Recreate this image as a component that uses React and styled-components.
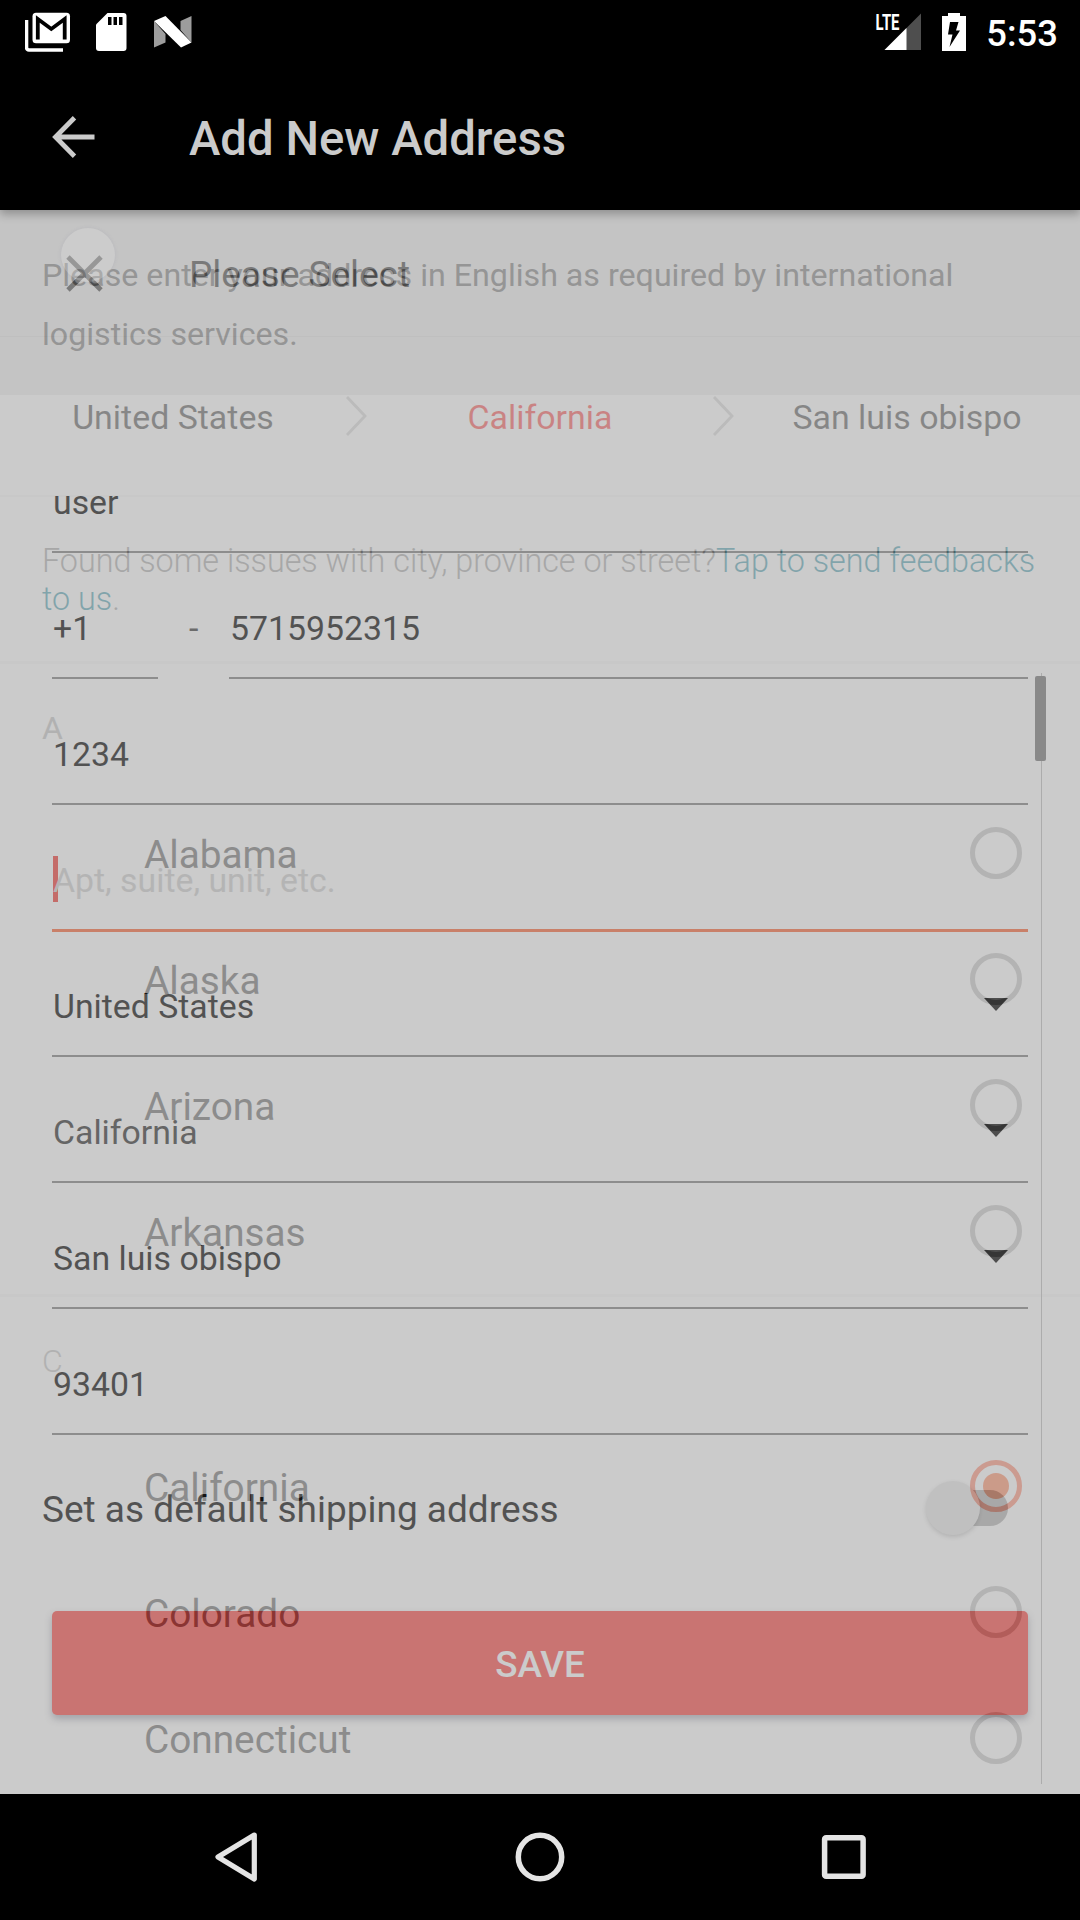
import React from "react";
import styled, { createGlobalStyle } from "styled-components";

const GlobalStyle = createGlobalStyle`
  * { box-sizing: border-box; }
  body { margin: 0; background: #000; font-family: Roboto, "Liberation Sans", sans-serif; }
`;

const Screen = styled.div`
  width: 1080px;
  height: 1920px;
  display: flex;
  flex-direction: column;
  overflow: hidden;
  background: #000;
`;

/* System status bar */
const StatusBar = styled.header`
  height: 72px;
  flex: none;
  display: flex;
  justify-content: space-between;
  padding: 0 22px 0 25px;
  color: #fff;
`;
const StatusGroup = styled.div`
  display: flex;
  align-items: center;
  gap: ${(p) => p.$gap}px;
  height: 64px;
`;
const Clock = styled.span`
  font-size: 36.4px;
  font-weight: 500;
  line-height: 40px;
  padding-top: 3px;
`;

/* App bar */
const AppBar = styled.div`
  height: 138px;
  flex: none;
  display: flex;
  align-items: center;
  padding: 0 52px 9px;
  color: #cbcbcb;
  background: #000;
  box-shadow: 0 4px 9px rgba(0, 0, 0, 0.28);
  z-index: 2;
`;
const AppTitle = styled.h1`
  margin: 0 0 0 94px;
  padding-top: 4px;
  font-size: 47.3px;
  line-height: 56px;
  font-weight: 500;
  white-space: nowrap;
`;

/* The form and the fading sheet share one grid cell */
const Stage = styled.main`
  height: 1584px;
  flex: none;
  display: grid;
  grid-template: 1584px / 1080px;
  overflow: hidden;
  position: relative;
  isolation: isolate;
`;
const Layer = styled.section`
  grid-area: 1 / 1;
  background: #fff;
  overflow: hidden;
`;
const Sheet = styled(Layer)`
  opacity: 0.36;
  position: relative;
  display: flex;
  flex-direction: column;
`;
const Dim = styled.div`
  grid-area: 1 / 1;
  background: rgba(0, 0, 0, 0.204);
  z-index: 1;
`;
const Touch = styled.div`
  position: absolute;
  left: 61px;
  top: 18px;
  width: 54px;
  height: 54px;
  border-radius: 50%;
  background: rgba(226, 226, 228, 0.28);
  box-shadow: 0 0 3px 1px rgba(150, 150, 170, 0.15);
  z-index: 2;
`;

/* Address form */
const Notice = styled.p`
  margin: 0;
  height: 185px;
  padding: 36px 42px 0;
  background: #f2f2f2;
  color: #969696;
  font-size: 32.18px;
  line-height: 59px;
  white-space: nowrap;
`;
const Fields = styled.div`
  padding: 32px 52px 0;
`;
const FieldRow = styled.div`
  height: 126px;
  display: flex;
`;
const Field = styled.div`
  flex: ${(p) => (p.$width ? `0 0 ${p.$width}px` : 1)};
  display: flex;
  align-items: flex-end;
  justify-content: space-between;
  padding: 0 20px 28px 1px;
  border-bottom: ${(p) => (p.$active ? "3px solid #fd6c40" : "2px solid #858585")};
  margin-bottom: ${(p) => (p.$active ? -1 : 0)}px;
  color: ${(p) => (p.$muted ? "#373737" : "#111")};
  font-size: 33.8px;
  line-height: 40px;
  white-space: nowrap;
`;
const Dash = styled.span`
  width: 71px;
  padding: 55px 0 0 31px;
  font-size: 34px;
  line-height: 40px;
  color: #444;
`;
const Hint = styled.span`
  color: #d4d4d4;
  margin-left: -5px;
`;
const Cursor = styled.i`
  width: 5px;
  height: 46px;
  margin-bottom: 4px;
  background: #f4453f;
`;
const HintLine = styled.span`
  display: flex;
  align-items: center;
  height: 40px;
`;
const Caret = styled.i`
  border: 12.5px solid transparent;
  border-top: 13px solid #0a0a0a;
  border-bottom: 0;
  margin: 0 0 16px;
`;
const SwitchRow = styled.div`
  height: 148px;
  display: flex;
  align-items: center;
  justify-content: space-between;
  padding: 0 72px 2px 42px;
  color: #111;
  font-size: 37px;
`;
const SwitchLabel = styled.span`
  padding-top: 2px;
`;
const Switch = styled.span`
  width: 72px;
  height: 36px;
  border-radius: 18px;
  background: #bcbcbc;
  display: flex;
  align-items: center;
`;
const Thumb = styled.i`
  flex: none;
  width: 54px;
  height: 54px;
  margin-left: -10px;
  border-radius: 50%;
  background: #ececec;
  box-shadow: 0 2px 4px rgba(0, 0, 0, 0.18);
`;
const SaveButton = styled.button`
  display: block;
  width: 976px;
  height: 104px;
  margin: 28px 52px 0;
  padding: 3px 0 0;
  border: 0;
  border-radius: 5px;
  background: #fd5551;
  color: #fff;
  font: 500 36.8px Roboto, sans-serif;
  box-shadow: 0 4px 7px rgba(30, 30, 60, 0.34);
`;

/* Region picker sheet */
const SheetHeader = styled.div`
  height: 127px;
  flex: none;
  display: flex;
  align-items: center;
  padding: 0 64px;
  border-bottom: 1px solid #efefef;
  color: #000;
`;
const SheetTitle = styled.h2`
  margin: 0 0 0 84px;
  padding-top: 3px;
  font-size: 36.9px;
  line-height: 42px;
  font-weight: 400;
`;
const Steps = styled.nav`
  height: 160px;
  flex: none;
  display: flex;
  align-items: center;
  border-bottom: 2px solid #f5f5f5;
`;
const Step = styled.span`
  flex: 1;
  text-align: center;
  padding-top: 3px;
  font-size: 33.9px;
  line-height: 40px;
  color: ${(p) => (p.$current ? "#fb0a0a" : "#151515")};
`;
const Feedback = styled.p`
  margin: 0;
  height: 164px;
  flex: none;
  padding: 45px 42px 0;
  font-size: 32.3px;
  font-weight: 300;
  line-height: 38px;
  color: #858585;
  white-space: nowrap;
`;
const FeedbackLink = styled.span`
  color: #007a93;
`;
const SectionHead = styled.div`
  height: 129px;
  flex: none;
  border-top: 3px solid #f7f7f7;
  padding: 44px 42px 0;
  font-size: 32px;
  line-height: 40px;
  color: #a8a8a8;
  font-weight: ${(p) => (p.$light ? 300 : 400)};
`;
const Option = styled.div`
  height: 126px;
  flex: none;
  display: flex;
  align-items: center;
  justify-content: space-between;
  padding: 0 58px 0 144px;
  font-size: 38.75px;
  color: #262626;
`;
const OptionName = styled.span`
  line-height: 44px;
  padding-top: 3px;
`;
const Radio = styled.i`
  width: 52px;
  height: 52px;
  border-radius: 50%;
  border: 5px solid ${(p) => (p.$on ? "#ff5a36" : "#aeaeae")};
  display: grid;
  place-items: center;
  &::after {
    content: "";
    width: 26px;
    height: 26px;
    border-radius: 50%;
    background: ${(p) => (p.$on ? "#ff5a20" : "transparent")};
  }
`;
const ScrollTrack = styled.div`
  position: absolute;
  right: 33px;
  top: 463px;
  width: 12px;
  height: 1111px;
  background: linear-gradient(#999, #999) 6px 0 / 1px 100% no-repeat;
`;
const ScrollThumb = styled.div`
  margin-top: 3px;
  width: 11px;
  height: 85px;
  border-radius: 2px;
  background: #1c1c20;
`;

/* System navigation */
const NavBar = styled.footer`
  height: 126px;
  flex: none;
  display: flex;
  align-items: center;
  justify-content: space-between;
  padding: 0 211px 0 212px;
`;

const GmailIcon = () => (
  <svg width="46" height="40" viewBox="0 0 46 40">
    <path d="M1.500 8v27.500a2.500 2.500 0 0 0 2.500 2.500H38" fill="none" stroke="#fff" strokeWidth="3.600" />
    <rect x="7.500" y="0.700" width="37.500" height="30.500" rx="3.500" fill="#fff" />
    <path d="M12.800 27.500V7l13.500 10L39.700 7v20.500" fill="none" stroke="#000" strokeWidth="3.800" />
  </svg>
);
const SdIcon = () => (
  <svg width="33" height="38" viewBox="0 0 33 38">
    <path d="M11.500 0H27.500a3 3 0 0 1 3 3v32a3 3 0 0 1-3 3H3a3 3 0 0 1-3-3V11.500z" fill="#fff" />
    <path d="M12 4h3.500v8H12zM17.500 4H21v8h-3.500zM23 4h3.500v8H23z" fill="#000" />
  </svg>
);
const NIcon = () => (
  <svg width="38" height="32" viewBox="0 0 38 32">
    <path d="M0 5v26.500l11.500-5V18zM37.500 0v26.500L26.500 14V5z" fill="#9d9d9d" />
    <path d="M0 5L11.500 0l26 26.500-10.500 5z" fill="#fff" />
  </svg>
);
const SignalIcon = () => (
  <svg width="47" height="54" viewBox="0 -8 47 54">
    <path d="M46 0.500V37H9.500z" fill="#4e4e4e" />
    <path d="M31.500 15V37H9.500z" fill="#fff" />
    <text x="0.500" y="16.500" fontFamily="Roboto, sans-serif" fontWeight="700" fontSize="22" textLength="24" lengthAdjust="spacingAndGlyphs" fill="#fff">LTE</text>
  </svg>
);
const BatteryIcon = () => (
  <svg width="24" height="38" viewBox="0 0 24 38">
    <path d="M6 0h12v3h6v35H0V3h6z" fill="#fff" />
    <path d="M8 9h8.500l-2.500 8.500h4L7.500 34l3-12.500H6z" fill="#000" />
  </svg>
);
const BackArrow = () => (
  <svg width="43" height="42" viewBox="0 0 43 42">
    <path d="M22.500 1.800L3.500 21l19 19.200M3.500 21H42.500" fill="none" stroke="#cbcbcb" strokeWidth="4.800" />
  </svg>
);
const CloseIcon = () => (
  <svg width="41" height="43" viewBox="0 -2 41 43">
    <path d="M4 3l33 33M37 3L4 36" fill="none" stroke="#000" strokeWidth="4.800" />
  </svg>
);
const Chevron = () => (
  <svg width="21" height="40" viewBox="0 0 21 40">
    <path d="M1 1l18 19L1 39" fill="none" stroke="#c8c8c8" strokeWidth="2.800" />
  </svg>
);
const NavBack = () => (
  <svg width="48" height="52" viewBox="0 0 48 52">
    <path d="M42.300 4L6 26l36.300 22z" fill="none" stroke="#e4e4e4" strokeWidth="5.200" strokeLinejoin="round" />
  </svg>
);
const NavHome = () => (
  <svg width="52" height="52" viewBox="0 0 52 52">
    <circle cx="26" cy="26" r="21.700" fill="none" stroke="#e4e4e4" strokeWidth="5.500" />
  </svg>
);
const NavRecents = () => (
  <svg width="50" height="52" viewBox="0 0 50 52">
    <rect x="5.600" y="6.800" width="38.500" height="38.500" rx="1.500" fill="none" stroke="#e4e4e4" strokeWidth="5.500" />
  </svg>
);

const SECTIONS = [
  { letter: "A", names: ["Alabama", "Alaska", "Arizona", "Arkansas"] },
  { letter: "C", light: true, names: ["California", "Colorado", "Connecticut"] },
];

export default function App() {
  return (
    <Screen>
      <GlobalStyle />
      <StatusBar>
        <StatusGroup $gap={25}>
          <GmailIcon />
          <SdIcon />
          <NIcon />
        </StatusGroup>
        <StatusGroup $gap={20}>
          <SignalIcon />
          <BatteryIcon />
          <Clock>5:53</Clock>
        </StatusGroup>
      </StatusBar>
      <AppBar>
        <BackArrow />
        <AppTitle>Add New Address</AppTitle>
      </AppBar>
      <Stage>
        <Layer>
          <Notice>
            Please enter your address in English as required by international
            <br />
            logistics services.
          </Notice>
          <Fields>
            <FieldRow><Field>user</Field></FieldRow>
            <FieldRow>
              <Field $width={106}>+1</Field>
              <Dash>-</Dash>
              <Field>5715952315</Field>
            </FieldRow>
            <FieldRow><Field>1234</Field></FieldRow>
            <FieldRow>
              <Field $active>
                <HintLine><Cursor /><Hint>Apt, suite, unit, etc.</Hint></HintLine>
              </Field>
            </FieldRow>
            <FieldRow><Field>United States<Caret /></Field></FieldRow>
            <FieldRow><Field $muted>California<Caret /></Field></FieldRow>
            <FieldRow><Field>San luis obispo<Caret /></Field></FieldRow>
            <FieldRow><Field>93401</Field></FieldRow>
          </Fields>
          <SwitchRow>
            <SwitchLabel>Set as default shipping address</SwitchLabel>
            <Switch><Thumb /></Switch>
          </SwitchRow>
          <SaveButton>SAVE</SaveButton>
        </Layer>
        <Sheet>
          <SheetHeader>
            <CloseIcon />
            <SheetTitle>Please Select</SheetTitle>
          </SheetHeader>
          <Steps>
            <Step>United States</Step>
            <Chevron />
            <Step $current>California</Step>
            <Chevron />
            <Step>San luis obispo</Step>
          </Steps>
          <Feedback>
            Found some issues with city, province or street?
            <FeedbackLink>Tap to send feedbacks<br />to us</FeedbackLink>.
          </Feedback>
          {SECTIONS.map((section) => (
            <React.Fragment key={section.letter}>
              <SectionHead $light={section.light}>{section.letter}</SectionHead>
              {section.names.map((name) => (
                <Option key={name}>
                  <OptionName>{name}</OptionName>
                  <Radio $on={name === "California"} />
                </Option>
              ))}
            </React.Fragment>
          ))}
          <ScrollTrack><ScrollThumb /></ScrollTrack>
        </Sheet>
        <Dim />
        <Touch />
      </Stage>
      <NavBar>
        <NavBack />
        <NavHome />
        <NavRecents />
      </NavBar>
    </Screen>
  );
}
